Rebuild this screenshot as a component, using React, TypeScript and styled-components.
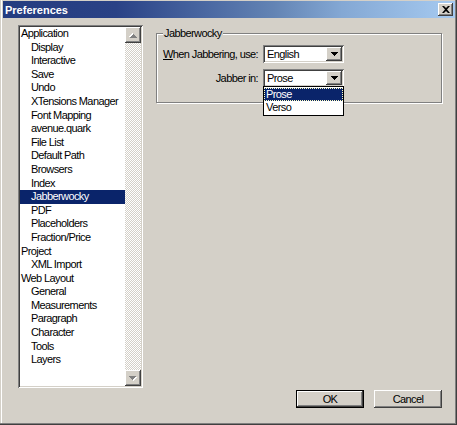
import styled, { createGlobalStyle } from "styled-components"

// #region styled
const GlobalStyle = createGlobalStyle`
  html, body {
    margin: 0;
    padding: 0;
    background: #d4d0c8;
  }
  body {
    font-family: "Liberation Sans", Arial, sans-serif;
    font-size: 11px;
    color: #000;
  }
`

const Window = styled.div`
  box-sizing: border-box;
  width: 457px;
  height: 425px;
  padding: 1px 2px 3px 3px;
  background: #d4d0c8;
  display: flex;
  flex-direction: column;
  box-shadow: inset -1px -1px #404040, inset -2px -2px #808080, inset 1px 0 #d4d0c8, inset 2px 0 #fff;
`

const TitleBar = styled.div`
  height: 17px;
  display: flex;
  align-items: center;
  padding: 0 2px 0 2px;
  background: linear-gradient(to right, #243c80 0%, #2a4286 25%, #4a68a2 45%, #6384b4 60%, #84a8d4 75%, #a6caf0 100%);
`

const Title = styled.span`
  color: #fff;
  font-weight: bold;
  font-size: 11px;
`

const CloseButton = styled.div`
  box-sizing: border-box;
  margin-left: auto;
  width: 15px;
  height: 13px;
  background: #d4d0c8;
  display: flex;
  align-items: center;
  justify-content: center;
  box-shadow: inset -1px -1px #404040, inset 1px 1px #fff, inset -2px -2px #808080;
`

const Body = styled.div`
  flex: 1;
  display: flex;
  flex-direction: column;
  padding: 7px 13px 0 15px;
  letter-spacing: -0.6px;
`

const TopRow = styled.div`
  display: flex;
  align-items: flex-start;
  gap: 13px;
`

const ListBox = styled.div`
  box-sizing: border-box;
  width: 125px;
  height: 363px;
  padding: 2px;
  background: #fff;
  display: flex;
  box-shadow: inset 1px 1px #808080, inset -1px -1px #fff, inset 2px 2px #404040, inset -2px -2px #d4d0c8;
`

const Items = styled.div`
  flex: 1;
  display: flex;
  flex-direction: column;
`

const Item = styled.div<{ $sub?: boolean; $selected?: boolean }>`
  height: 13.6px;
  line-height: 13.6px;
  padding-left: ${(p) => (p.$sub ? "11px" : "1px")};
  white-space: nowrap;
  background: ${(p) => (p.$selected ? "#0a246a" : "transparent")};
  color: ${(p) => (p.$selected ? "#fff" : "#000")};
`

const ScrollBar = styled.div`
  width: 16px;
  display: flex;
  flex-direction: column;
`

const ScrollButton = styled.div`
  box-sizing: border-box;
  width: 16px;
  height: 16px;
  background: #d4d0c8;
  display: flex;
  align-items: center;
  justify-content: center;
  box-shadow: inset -1px -1px #404040, inset 1px 1px #fff, inset -2px -2px #808080;
`

const Track = styled.div`
  flex: 1;
  background: repeating-conic-gradient(#d4d0c8 0 25%, #fff 0 50%) 0 0 / 2px 2px;
`

const RightPanel = styled.div`
  flex: 1;
  padding-top: 2px;
`

const Group = styled.fieldset`
  margin: 0;
  padding: 5px 6px 15px 6px;
  min-width: 0;
  border: 1px solid #808080;
  box-shadow: inset 1px 1px #fff, 1px 1px #fff;
`

const Legend = styled.legend`
  padding: 0 1px;
  line-height: 13px;
  background: #d4d0c8;
`

const Form = styled.div`
  display: grid;
  grid-template-columns: auto 81px;
  column-gap: 5px;
  row-gap: 6px;
  align-items: center;
  justify-content: start;
`

const Label = styled.span`
  justify-self: end;
  white-space: nowrap;
`

const Select = styled.div`
  box-sizing: border-box;
  position: relative;
  width: 81px;
  height: 18px;
  padding: 2px;
  background: #fff;
  display: flex;
  align-items: stretch;
  box-shadow: inset 1px 1px #808080, inset -1px -1px #fff, inset 2px 2px #404040, inset -2px -2px #d4d0c8;
`

const SelectValue = styled.span`
  flex: 1;
  padding-left: 2px;
  line-height: 14px;
`

const DropButton = styled.div`
  box-sizing: border-box;
  width: 16px;
  background: #d4d0c8;
  display: flex;
  align-items: center;
  justify-content: center;
  box-shadow: inset -1px -1px #404040, inset 1px 1px #fff, inset -2px -2px #808080;
`

const Popup = styled.div`
  box-sizing: border-box;
  position: absolute;
  top: 17px;
  left: 0;
  width: 81px;
  background: #fff;
  border: 1px solid #000;
  padding: 1px 0;
`

const PopupItem = styled.div<{ $selected?: boolean }>`
  height: 13px;
  line-height: 13px;
  padding-left: 2px;
  background: ${(p) => (p.$selected ? "#0a246a" : "#fff")};
  color: ${(p) => (p.$selected ? "#fff" : "#000")};
  outline: ${(p) => (p.$selected ? "1px dotted #ffffc0" : "none")};
  outline-offset: -1px;
`

const Footer = styled.div`
  margin-top: auto;
  padding-bottom: 14px;
  display: flex;
  justify-content: flex-end;
  gap: 10px;
`

const Button = styled.div<{ $default?: boolean }>`
  box-sizing: border-box;
  width: 68px;
  height: 18px;
  display: flex;
  align-items: center;
  justify-content: center;
  background: #d4d0c8;
  border: ${(p) => (p.$default ? "1px solid #000" : "none")};
  box-shadow: ${(p) =>
    p.$default
      ? "inset -1px -1px #404040, inset 1px 1px #fff, inset -2px -2px #808080"
      : "inset -1px -1px #404040, inset 1px 1px #fff, inset -2px -2px #808080, inset 2px 2px #d4d0c8"};
`
// #endregion

const items: { label: string; sub?: boolean }[] = [
  { label: "Application" },
  { label: "Display", sub: true },
  { label: "Interactive", sub: true },
  { label: "Save", sub: true },
  { label: "Undo", sub: true },
  { label: "XTensions Manager", sub: true },
  { label: "Font Mapping", sub: true },
  { label: "avenue.quark", sub: true },
  { label: "File List", sub: true },
  { label: "Default Path", sub: true },
  { label: "Browsers", sub: true },
  { label: "Index", sub: true },
  { label: "Jabberwocky", sub: true },
  { label: "PDF", sub: true },
  { label: "Placeholders", sub: true },
  { label: "Fraction/Price", sub: true },
  { label: "Project" },
  { label: "XML Import", sub: true },
  { label: "Web Layout" },
  { label: "General", sub: true },
  { label: "Measurements", sub: true },
  { label: "Paragraph", sub: true },
  { label: "Character", sub: true },
  { label: "Tools", sub: true },
  { label: "Layers", sub: true },
]

const ArrowDown = ({ color = "#000" }: { color?: string }) => (
  <svg width="7" height="4" viewBox="0 0 7 4" aria-hidden="true">
    <path d="M0 0h7v1H0zM1 1h5v1H1zM2 2h3v1H2zM3 3h1v1H3z" fill={color} />
  </svg>
)

const GrayArrow = ({ up }: { up?: boolean }) => (
  <svg width="8" height="5" viewBox="0 0 8 5" aria-hidden="true" style={{ transform: up ? "rotate(180deg)" : undefined }}>
    <path d="M1 1h7v1H1zM2 2h5v1H2zM3 3h3v1H3zM4 4h1v1H4z" fill="#fff" />
    <path d="M0 0h7v1H0zM1 1h5v1H1zM2 2h3v1H2zM3 3h1v1H3z" fill="#808080" />
  </svg>
)

const App = () => {
  return (
    <Window>
      <GlobalStyle />
      <TitleBar>
        <Title>Preferences</Title>
        <CloseButton>
          <svg width="8" height="7" viewBox="0 0 8 7" aria-hidden="true">
            <path d="M0 0h2l2 2 2-2h2L5 3.5 8 7H6L4 5 2 7H0l3-3.5z" fill="#000" />
          </svg>
        </CloseButton>
      </TitleBar>

      <Body>
        <TopRow>
          <ListBox>
            <Items>
              {items.map((it) => (
                <Item key={it.label} $sub={it.sub} $selected={it.label === "Jabberwocky"}>
                  {it.label}
                </Item>
              ))}
            </Items>
            <ScrollBar>
              <ScrollButton>
                <GrayArrow up />
              </ScrollButton>
              <Track />
              <ScrollButton>
                <GrayArrow />
              </ScrollButton>
            </ScrollBar>
          </ListBox>

          <RightPanel>
            <Group>
              <Legend>Jabberwocky</Legend>
              <Form>
                <Label>
                  <u>W</u>hen Jabbering, use:
                </Label>
                <Select>
                  <SelectValue>English</SelectValue>
                  <DropButton>
                    <ArrowDown />
                  </DropButton>
                </Select>
                <Label>Jabber in:</Label>
                <Select>
                  <SelectValue>Prose</SelectValue>
                  <DropButton>
                    <ArrowDown />
                  </DropButton>
                  <Popup>
                    <PopupItem $selected>Prose</PopupItem>
                    <PopupItem>Verso</PopupItem>
                  </Popup>
                </Select>
              </Form>
            </Group>
          </RightPanel>
        </TopRow>

        <Footer>
          <Button $default>OK</Button>
          <Button>Cancel</Button>
        </Footer>
      </Body>
    </Window>
  )
}

export default App
